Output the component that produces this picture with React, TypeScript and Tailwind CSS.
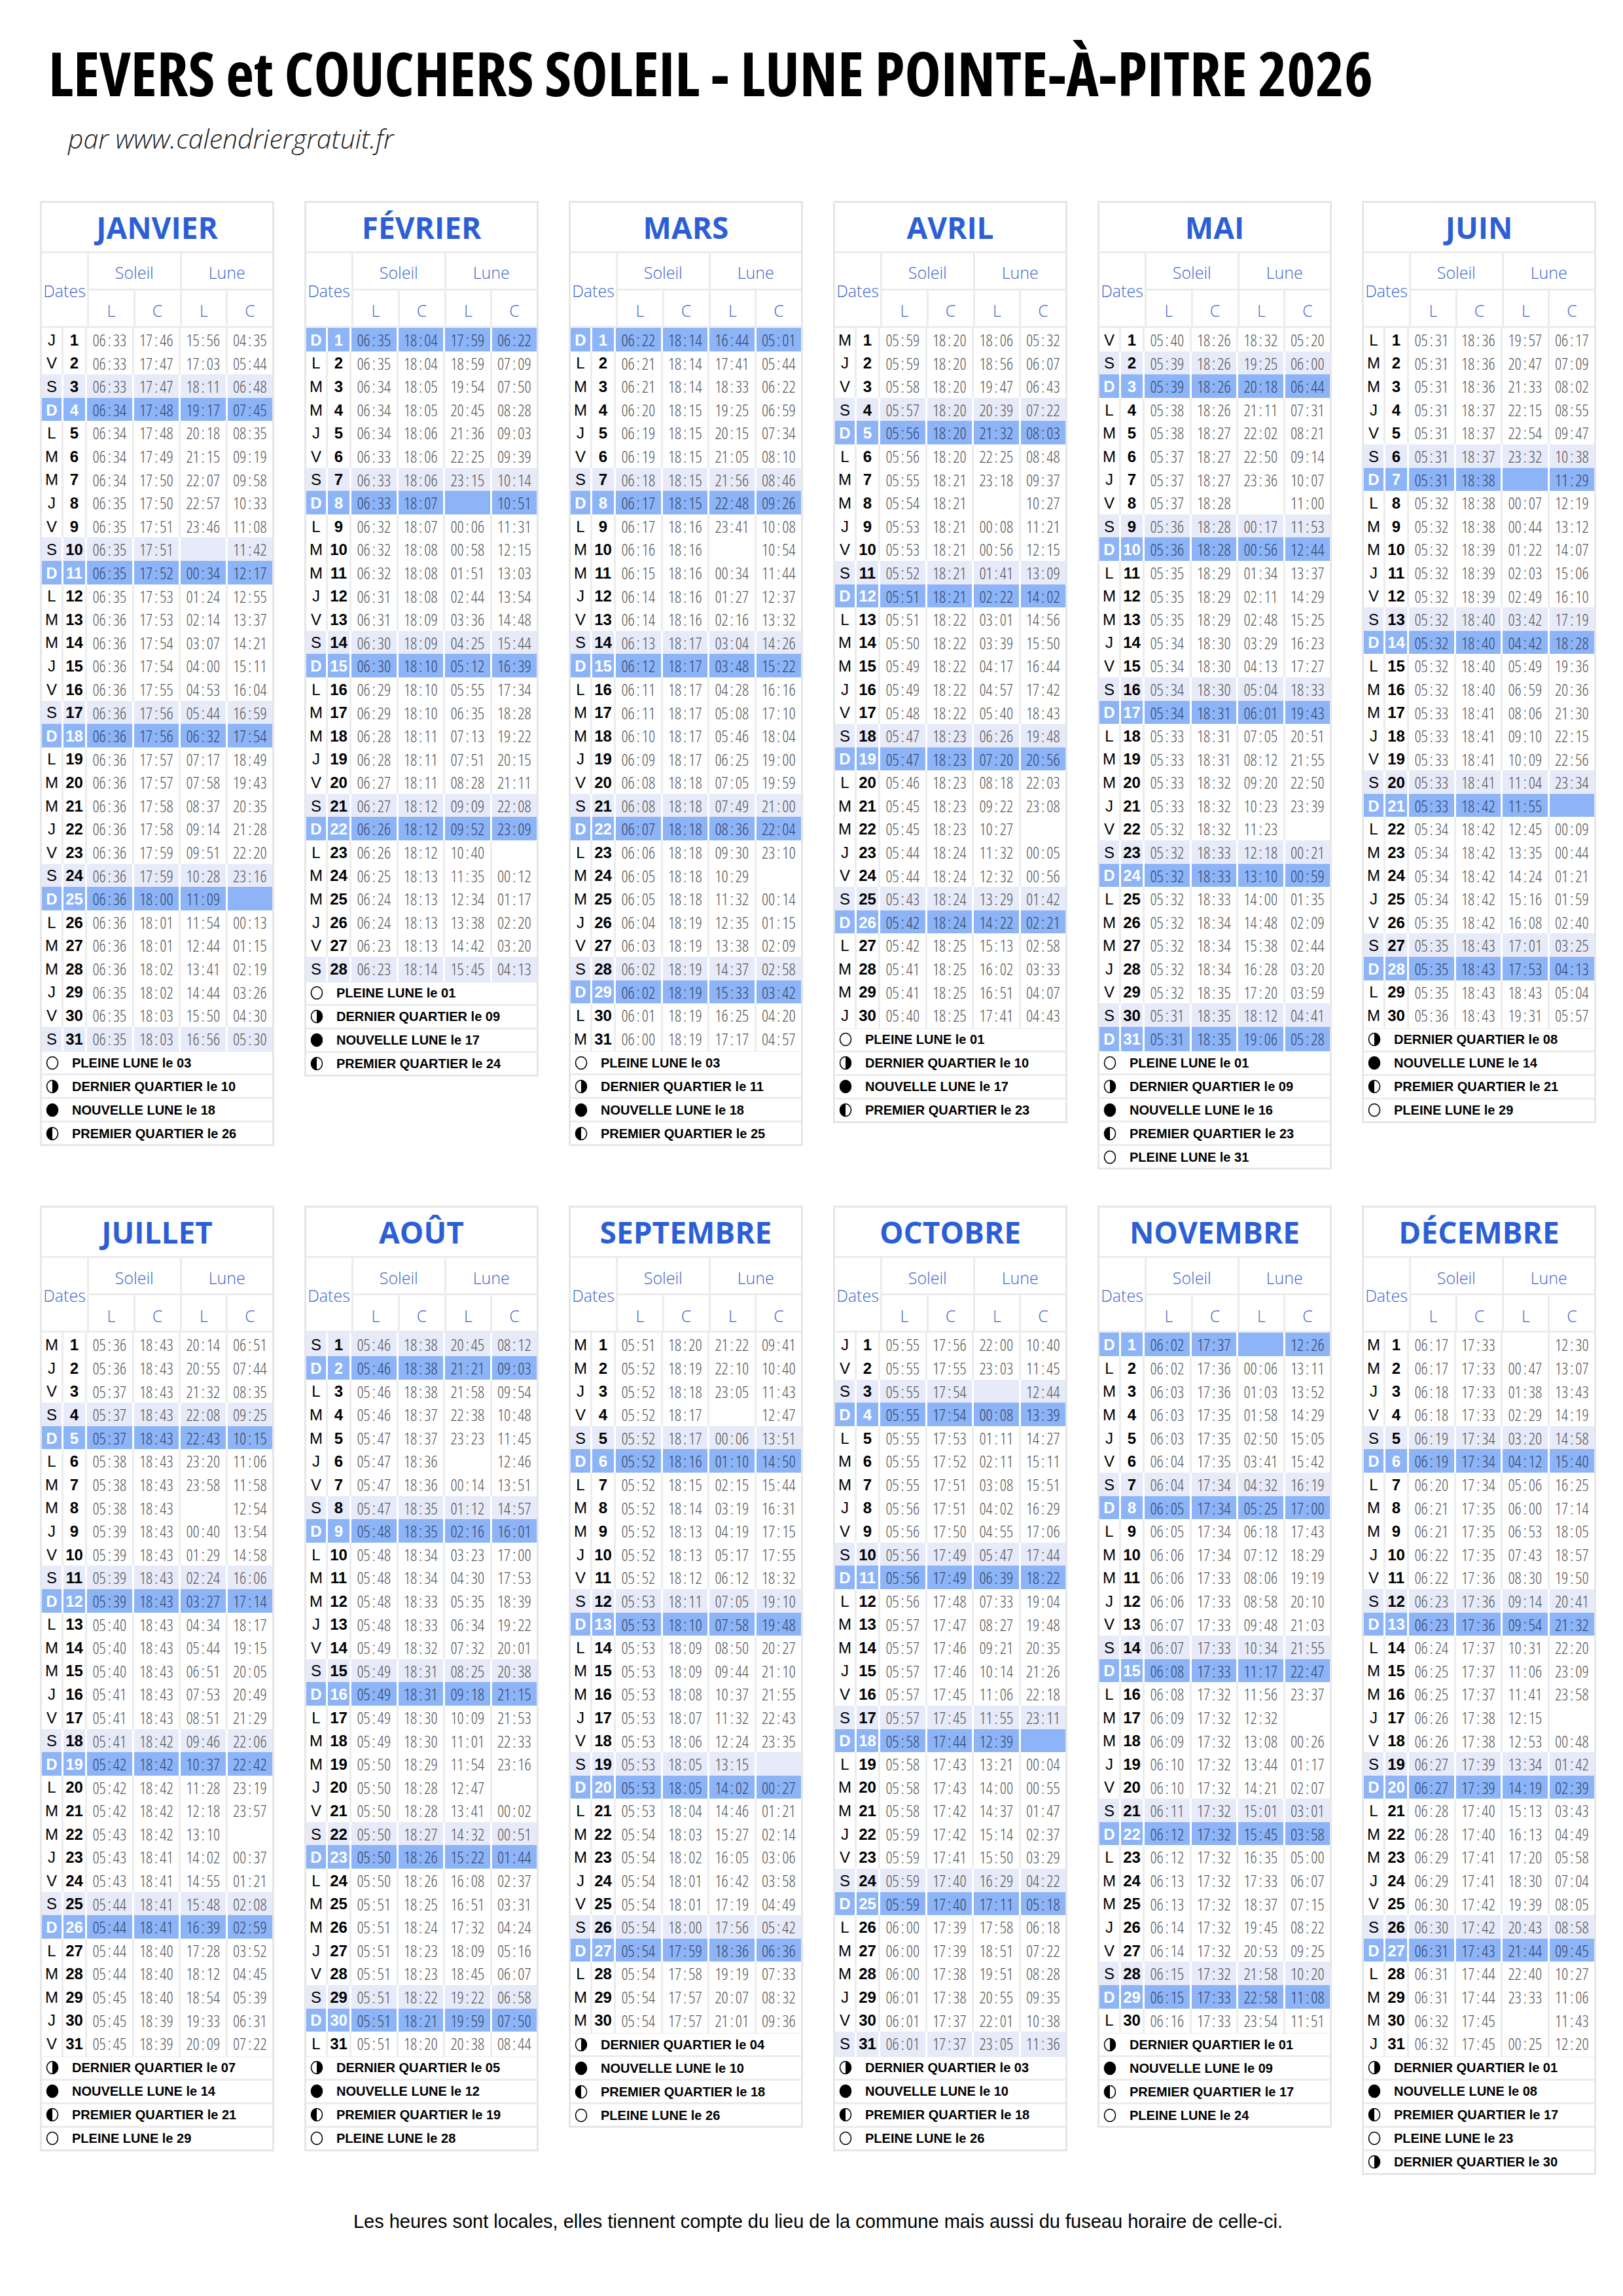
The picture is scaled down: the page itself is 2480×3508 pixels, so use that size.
const MONTHS = [
  {
    name: "JANVIER",
    phases: "PL03 DQ10 NL18 PQ26",
    data: `06:33 17:46 15:56 04:35
06:33 17:47 17:03 05:44
06:33 17:47 18:11 06:48
06:34 17:48 19:17 07:45
06:34 17:48 20:18 08:35
06:34 17:49 21:15 09:19
06:34 17:50 22:07 09:58
06:35 17:50 22:57 10:33
06:35 17:51 23:46 11:08
06:35 17:51 - 11:42
06:35 17:52 00:34 12:17
06:35 17:53 01:24 12:55
06:36 17:53 02:14 13:37
06:36 17:54 03:07 14:21
06:36 17:54 04:00 15:11
06:36 17:55 04:53 16:04
06:36 17:56 05:44 16:59
06:36 17:56 06:32 17:54
06:36 17:57 07:17 18:49
06:36 17:57 07:58 19:43
06:36 17:58 08:37 20:35
06:36 17:58 09:14 21:28
06:36 17:59 09:51 22:20
06:36 17:59 10:28 23:16
06:36 18:00 11:09 -
06:36 18:01 11:54 00:13
06:36 18:01 12:44 01:15
06:36 18:02 13:41 02:19
06:35 18:02 14:44 03:26
06:35 18:03 15:50 04:30
06:35 18:03 16:56 05:30`,
  },
  {
    name: "FÉVRIER",
    phases: "PL01 DQ09 NL17 PQ24",
    data: `06:35 18:04 17:59 06:22
06:35 18:04 18:59 07:09
06:34 18:05 19:54 07:50
06:34 18:05 20:45 08:28
06:34 18:06 21:36 09:03
06:33 18:06 22:25 09:39
06:33 18:06 23:15 10:14
06:33 18:07 - 10:51
06:32 18:07 00:06 11:31
06:32 18:08 00:58 12:15
06:32 18:08 01:51 13:03
06:31 18:08 02:44 13:54
06:31 18:09 03:36 14:48
06:30 18:09 04:25 15:44
06:30 18:10 05:12 16:39
06:29 18:10 05:55 17:34
06:29 18:10 06:35 18:28
06:28 18:11 07:13 19:22
06:28 18:11 07:51 20:15
06:27 18:11 08:28 21:11
06:27 18:12 09:09 22:08
06:26 18:12 09:52 23:09
06:26 18:12 10:40 -
06:25 18:13 11:35 00:12
06:24 18:13 12:34 01:17
06:24 18:13 13:38 02:20
06:23 18:13 14:42 03:20
06:23 18:14 15:45 04:13`,
  },
  {
    name: "MARS",
    phases: "PL03 DQ11 NL18 PQ25",
    data: `06:22 18:14 16:44 05:01
06:21 18:14 17:41 05:44
06:21 18:14 18:33 06:22
06:20 18:15 19:25 06:59
06:19 18:15 20:15 07:34
06:19 18:15 21:05 08:10
06:18 18:15 21:56 08:46
06:17 18:15 22:48 09:26
06:17 18:16 23:41 10:08
06:16 18:16 - 10:54
06:15 18:16 00:34 11:44
06:14 18:16 01:27 12:37
06:14 18:16 02:16 13:32
06:13 18:17 03:04 14:26
06:12 18:17 03:48 15:22
06:11 18:17 04:28 16:16
06:11 18:17 05:08 17:10
06:10 18:17 05:46 18:04
06:09 18:17 06:25 19:00
06:08 18:18 07:05 19:59
06:08 18:18 07:49 21:00
06:07 18:18 08:36 22:04
06:06 18:18 09:30 23:10
06:05 18:18 10:29 -
06:05 18:18 11:32 00:14
06:04 18:19 12:35 01:15
06:03 18:19 13:38 02:09
06:02 18:19 14:37 02:58
06:02 18:19 15:33 03:42
06:01 18:19 16:25 04:20
06:00 18:19 17:17 04:57`,
  },
  {
    name: "AVRIL",
    phases: "PL01 DQ10 NL17 PQ23",
    data: `05:59 18:20 18:06 05:32
05:59 18:20 18:56 06:07
05:58 18:20 19:47 06:43
05:57 18:20 20:39 07:22
05:56 18:20 21:32 08:03
05:56 18:20 22:25 08:48
05:55 18:21 23:18 09:37
05:54 18:21 - 10:27
05:53 18:21 00:08 11:21
05:53 18:21 00:56 12:15
05:52 18:21 01:41 13:09
05:51 18:21 02:22 14:02
05:51 18:22 03:01 14:56
05:50 18:22 03:39 15:50
05:49 18:22 04:17 16:44
05:49 18:22 04:57 17:42
05:48 18:22 05:40 18:43
05:47 18:23 06:26 19:48
05:47 18:23 07:20 20:56
05:46 18:23 08:18 22:03
05:45 18:23 09:22 23:08
05:45 18:23 10:27 -
05:44 18:24 11:32 00:05
05:44 18:24 12:32 00:56
05:43 18:24 13:29 01:42
05:42 18:24 14:22 02:21
05:42 18:25 15:13 02:58
05:41 18:25 16:02 03:33
05:41 18:25 16:51 04:07
05:40 18:25 17:41 04:43`,
  },
  {
    name: "MAI",
    phases: "PL01 DQ09 NL16 PQ23 PL31",
    data: `05:40 18:26 18:32 05:20
05:39 18:26 19:25 06:00
05:39 18:26 20:18 06:44
05:38 18:26 21:11 07:31
05:38 18:27 22:02 08:21
05:37 18:27 22:50 09:14
05:37 18:27 23:36 10:07
05:37 18:28 - 11:00
05:36 18:28 00:17 11:53
05:36 18:28 00:56 12:44
05:35 18:29 01:34 13:37
05:35 18:29 02:11 14:29
05:35 18:29 02:48 15:25
05:34 18:30 03:29 16:23
05:34 18:30 04:13 17:27
05:34 18:30 05:04 18:33
05:34 18:31 06:01 19:43
05:33 18:31 07:05 20:51
05:33 18:31 08:12 21:55
05:33 18:32 09:20 22:50
05:33 18:32 10:23 23:39
05:32 18:32 11:23 -
05:32 18:33 12:18 00:21
05:32 18:33 13:10 00:59
05:32 18:33 14:00 01:35
05:32 18:34 14:48 02:09
05:32 18:34 15:38 02:44
05:32 18:34 16:28 03:20
05:32 18:35 17:20 03:59
05:31 18:35 18:12 04:41
05:31 18:35 19:06 05:28`,
  },
  {
    name: "JUIN",
    phases: "DQ08 NL14 PQ21 PL29",
    data: `05:31 18:36 19:57 06:17
05:31 18:36 20:47 07:09
05:31 18:36 21:33 08:02
05:31 18:37 22:15 08:55
05:31 18:37 22:54 09:47
05:31 18:37 23:32 10:38
05:31 18:38 - 11:29
05:32 18:38 00:07 12:19
05:32 18:38 00:44 13:12
05:32 18:39 01:22 14:07
05:32 18:39 02:03 15:06
05:32 18:39 02:49 16:10
05:32 18:40 03:42 17:19
05:32 18:40 04:42 18:28
05:32 18:40 05:49 19:36
05:32 18:40 06:59 20:36
05:33 18:41 08:06 21:30
05:33 18:41 09:10 22:15
05:33 18:41 10:09 22:56
05:33 18:41 11:04 23:34
05:33 18:42 11:55 -
05:34 18:42 12:45 00:09
05:34 18:42 13:35 00:44
05:34 18:42 14:24 01:21
05:34 18:42 15:16 01:59
05:35 18:42 16:08 02:40
05:35 18:43 17:01 03:25
05:35 18:43 17:53 04:13
05:35 18:43 18:43 05:04
05:36 18:43 19:31 05:57`,
  },
  {
    name: "JUILLET",
    phases: "DQ07 NL14 PQ21 PL29",
    data: `05:36 18:43 20:14 06:51
05:36 18:43 20:55 07:44
05:37 18:43 21:32 08:35
05:37 18:43 22:08 09:25
05:37 18:43 22:43 10:15
05:38 18:43 23:20 11:06
05:38 18:43 23:58 11:58
05:38 18:43 - 12:54
05:39 18:43 00:40 13:54
05:39 18:43 01:29 14:58
05:39 18:43 02:24 16:06
05:39 18:43 03:27 17:14
05:40 18:43 04:34 18:17
05:40 18:43 05:44 19:15
05:40 18:43 06:51 20:05
05:41 18:43 07:53 20:49
05:41 18:43 08:51 21:29
05:41 18:42 09:46 22:06
05:42 18:42 10:37 22:42
05:42 18:42 11:28 23:19
05:42 18:42 12:18 23:57
05:43 18:42 13:10 -
05:43 18:41 14:02 00:37
05:43 18:41 14:55 01:21
05:44 18:41 15:48 02:08
05:44 18:41 16:39 02:59
05:44 18:40 17:28 03:52
05:44 18:40 18:12 04:45
05:45 18:40 18:54 05:39
05:45 18:39 19:33 06:31
05:45 18:39 20:09 07:22`,
  },
  {
    name: "AOÛT",
    phases: "DQ05 NL12 PQ19 PL28",
    data: `05:46 18:38 20:45 08:12
05:46 18:38 21:21 09:03
05:46 18:38 21:58 09:54
05:46 18:37 22:38 10:48
05:47 18:37 23:23 11:45
05:47 18:36 - 12:46
05:47 18:36 00:14 13:51
05:47 18:35 01:12 14:57
05:48 18:35 02:16 16:01
05:48 18:34 03:23 17:00
05:48 18:34 04:30 17:53
05:48 18:33 05:35 18:39
05:48 18:33 06:34 19:22
05:49 18:32 07:32 20:01
05:49 18:31 08:25 20:38
05:49 18:31 09:18 21:15
05:49 18:30 10:09 21:53
05:49 18:30 11:01 22:33
05:50 18:29 11:54 23:16
05:50 18:28 12:47 -
05:50 18:28 13:41 00:02
05:50 18:27 14:32 00:51
05:50 18:26 15:22 01:44
05:50 18:26 16:08 02:37
05:51 18:25 16:51 03:31
05:51 18:24 17:32 04:24
05:51 18:23 18:09 05:16
05:51 18:23 18:45 06:07
05:51 18:22 19:22 06:58
05:51 18:21 19:59 07:50
05:51 18:20 20:38 08:44`,
  },
  {
    name: "SEPTEMBRE",
    phases: "DQ04 NL10 PQ18 PL26",
    data: `05:51 18:20 21:22 09:41
05:52 18:19 22:10 10:40
05:52 18:18 23:05 11:43
05:52 18:17 - 12:47
05:52 18:17 00:06 13:51
05:52 18:16 01:10 14:50
05:52 18:15 02:15 15:44
05:52 18:14 03:19 16:31
05:52 18:13 04:19 17:15
05:52 18:13 05:17 17:55
05:52 18:12 06:12 18:32
05:53 18:11 07:05 19:10
05:53 18:10 07:58 19:48
05:53 18:09 08:50 20:27
05:53 18:09 09:44 21:10
05:53 18:08 10:37 21:55
05:53 18:07 11:32 22:43
05:53 18:06 12:24 23:35
05:53 18:05 13:15 -
05:53 18:05 14:02 00:27
05:53 18:04 14:46 01:21
05:54 18:03 15:27 02:14
05:54 18:02 16:05 03:06
05:54 18:01 16:42 03:58
05:54 18:01 17:19 04:49
05:54 18:00 17:56 05:42
05:54 17:59 18:36 06:36
05:54 17:58 19:19 07:33
05:54 17:57 20:07 08:32
05:54 17:57 21:01 09:36`,
  },
  {
    name: "OCTOBRE",
    phases: "DQ03 NL10 PQ18 PL26",
    data: `05:55 17:56 22:00 10:40
05:55 17:55 23:03 11:45
05:55 17:54 - 12:44
05:55 17:54 00:08 13:39
05:55 17:53 01:11 14:27
05:55 17:52 02:11 15:11
05:55 17:51 03:08 15:51
05:56 17:51 04:02 16:29
05:56 17:50 04:55 17:06
05:56 17:49 05:47 17:44
05:56 17:49 06:39 18:22
05:56 17:48 07:33 19:04
05:57 17:47 08:27 19:48
05:57 17:46 09:21 20:35
05:57 17:46 10:14 21:26
05:57 17:45 11:06 22:18
05:57 17:45 11:55 23:11
05:58 17:44 12:39 -
05:58 17:43 13:21 00:04
05:58 17:43 14:00 00:55
05:58 17:42 14:37 01:47
05:59 17:42 15:14 02:37
05:59 17:41 15:50 03:29
05:59 17:40 16:29 04:22
05:59 17:40 17:11 05:18
06:00 17:39 17:58 06:18
06:00 17:39 18:51 07:22
06:00 17:38 19:51 08:28
06:01 17:38 20:55 09:35
06:01 17:37 22:01 10:38
06:01 17:37 23:05 11:36`,
  },
  {
    name: "NOVEMBRE",
    phases: "DQ01 NL09 PQ17 PL24",
    data: `06:02 17:37 - 12:26
06:02 17:36 00:06 13:11
06:03 17:36 01:03 13:52
06:03 17:35 01:58 14:29
06:03 17:35 02:50 15:05
06:04 17:35 03:41 15:42
06:04 17:34 04:32 16:19
06:05 17:34 05:25 17:00
06:05 17:34 06:18 17:43
06:06 17:34 07:12 18:29
06:06 17:33 08:06 19:19
06:06 17:33 08:58 20:10
06:07 17:33 09:48 21:03
06:07 17:33 10:34 21:55
06:08 17:33 11:17 22:47
06:08 17:32 11:56 23:37
06:09 17:32 12:32 -
06:09 17:32 13:08 00:26
06:10 17:32 13:44 01:17
06:10 17:32 14:21 02:07
06:11 17:32 15:01 03:01
06:12 17:32 15:45 03:58
06:12 17:32 16:35 05:00
06:13 17:32 17:33 06:07
06:13 17:32 18:37 07:15
06:14 17:32 19:45 08:22
06:14 17:32 20:53 09:25
06:15 17:32 21:58 10:20
06:15 17:33 22:58 11:08
06:16 17:33 23:54 11:51`,
  },
  {
    name: "DÉCEMBRE",
    phases: "DQ01 NL08 PQ17 PL23 DQ30",
    data: `06:17 17:33 - 12:30
06:17 17:33 00:47 13:07
06:18 17:33 01:38 13:43
06:18 17:33 02:29 14:19
06:19 17:34 03:20 14:58
06:19 17:34 04:12 15:40
06:20 17:34 05:06 16:25
06:21 17:35 06:00 17:14
06:21 17:35 06:53 18:05
06:22 17:35 07:43 18:57
06:22 17:36 08:30 19:50
06:23 17:36 09:14 20:41
06:23 17:36 09:54 21:32
06:24 17:37 10:31 22:20
06:25 17:37 11:06 23:09
06:25 17:37 11:41 23:58
06:26 17:38 12:15 -
06:26 17:38 12:53 00:48
06:27 17:39 13:34 01:42
06:27 17:39 14:19 02:39
06:28 17:40 15:13 03:43
06:28 17:40 16:13 04:49
06:29 17:41 17:20 05:58
06:29 17:41 18:30 07:04
06:30 17:42 19:39 08:05
06:30 17:42 20:43 08:58
06:31 17:43 21:44 09:45
06:31 17:44 22:40 10:27
06:31 17:44 23:33 11:06
06:32 17:45 - 11:43
06:32 17:45 00:25 12:20`,
  },
];

const WEEKDAYS = ["D", "L", "M", "M", "J", "V", "S"];

const PHASE_LABELS: Record<string, string> = {
  PL: "PLEINE LUNE",
  DQ: "DERNIER QUARTIER",
  NL: "NOUVELLE LUNE",
  PQ: "PREMIER QUARTIER",
};

const COLS = "grid grid-cols-[30px_36px_1fr_1fr_1fr_1fr]";

function MoonIcon({ phase }: { phase: string }) {
  return (
    <svg width="20" height="22" viewBox="0 0 20 22">
      <ellipse cx="10" cy="11" rx="8.5" ry="9.5" fill={phase === "NL" ? "#000" : "#fff"} stroke="#000" strokeWidth="1.6" />
      {phase === "DQ" && <path d="M10 1.5 A8.5 9.5 0 0 1 10 20.5 Z" fill="#000" />}
      {phase === "PQ" && <path d="M10 1.5 A8.5 9.5 0 0 0 10 20.5 Z" fill="#000" />}
    </svg>
  );
}

function Time({ value }: { value: string }) {
  if (value === "-") return null;
  const [h, m] = value.split(":");
  return (
    <span>
      {h}
      <span className="px-[3px]">:</span>
      {m}
    </span>
  );
}

function DayRow({ month, day, times }: { month: number; day: number; times: string[] }) {
  const wd = new Date(2026, month, day).getDay();
  const sun = wd === 0;
  const sat = wd === 6;
  const bg = sun ? "bg-[#8cb4f7]" : sat ? "bg-[#e7eaf8]" : "bg-white";
  const sep = sun || sat ? "border-white" : "border-[#ececec]";
  const letter = sun ? "text-white font-bold" : "text-black";
  const num = sun ? "text-white" : "text-black";
  const digits = sun ? "text-[#34466a]" : "text-[#555]";

  return (
    <div className={`${COLS} h-[35.6px]`}>
      <div className={`${bg} flex items-center justify-center text-[24px] font-['Liberation_Sans',sans-serif] ${letter}`}>
        {WEEKDAYS[wd]}
      </div>
      <div className={`${bg} border-l-[3px] ${sep} flex items-center justify-center text-[24px] font-bold font-['Liberation_Sans',sans-serif] ${num}`}>
        {day}
      </div>
      {times.map((t, i) => (
        <div
          key={i}
          className={`${bg} border-l-[3px] ${sep} flex items-center justify-center text-[25px] font-light [font-stretch:condensed] font-['Open_Sans',sans-serif] ${digits}`}
        >
          <Time value={t} />
        </div>
      ))}
    </div>
  );
}

function MonthCard({ index, name, data, phases }: { index: number; name: string; data: string; phases: string }) {
  const rows = data.split("\n").map((line) => line.trim().split(" "));
  const legend = phases.split(" ").map((p) => ({ phase: p.slice(0, 2), day: p.slice(2) }));

  return (
    <div className="border-[3px] border-[#e6e6e6] bg-white">
      <div className="flex h-[77px] items-center justify-center border-b-[3px] border-[#ececec] font-['Open_Sans',sans-serif] text-[46px] font-bold text-[#2c5fd6] [font-stretch:88%]">
        {name}
      </div>
      <div className={`${COLS} grid-rows-[54px_54px] gap-[3px] bg-[#ececec] font-['Open_Sans',sans-serif] text-[25px] font-light text-[#3b63c9]`}>
        <div className="col-span-2 row-span-2 flex items-center justify-center bg-white pt-[4px]">Dates</div>
        <div className="col-span-2 flex items-center justify-center bg-white pt-[6px]">Soleil</div>
        <div className="col-span-2 flex items-center justify-center bg-white pt-[6px]">Lune</div>
        <div className="flex items-center justify-center bg-white pt-[8px]">L</div>
        <div className="flex items-center justify-center bg-white pt-[8px]">C</div>
        <div className="flex items-center justify-center bg-white pt-[8px]">L</div>
        <div className="flex items-center justify-center bg-white pt-[8px]">C</div>
      </div>
      <div className="border-t-[3px] border-[#ececec]">
        {rows.map((times, i) => (
          <DayRow key={i} month={index} day={i + 1} times={times} />
        ))}
      </div>
      <div className="flex flex-col gap-[3px] bg-[#ececec] pt-[3px]">
        {legend.map((l, i) => (
          <div key={i} className="flex h-[33px] items-center bg-white">
            <div className="ml-[6px] mr-[20px] flex">
              <MoonIcon phase={l.phase} />
            </div>
            <span className="font-['Liberation_Sans',sans-serif] text-[20px] font-bold text-black">
              {PHASE_LABELS[l.phase]} le {l.day}
            </span>
          </div>
        ))}
      </div>
    </div>
  );
}

export default function App() {
  return (
    <div className="h-[3508px] w-[2480px] bg-white">
      <div className="h-[307px] pl-[74px] pt-[64px]">
        <h1 className="font-['Open_Sans',sans-serif] text-[93.5px] font-bold leading-none text-black [font-stretch:condensed]">
          LEVERS et COUCHERS SOLEIL - LUNE POINTE-À-PITRE 2026
        </h1>
        <p className="ml-[30px] mt-[33px] font-['Open_Sans',sans-serif] text-[41px] font-light italic leading-none text-[#222]">
          par www.calendriergratuit.fr
        </p>
      </div>
      <div className="ml-[61px] w-[2378px]">
        <div className="grid grid-cols-6 items-start gap-x-[46px] gap-y-[55px]">
          {MONTHS.map((m, i) => (
            <MonthCard key={m.name} index={i} name={m.name} data={m.data} phases={m.phases} />
          ))}
        </div>
        <p className="mt-[50px] text-center font-['Liberation_Sans',sans-serif] text-[29px] text-black">
          Les heures sont locales, elles tiennent compte du lieu de la commune mais aussi du fuseau horaire de celle-ci.
        </p>
      </div>
    </div>
  );
}
